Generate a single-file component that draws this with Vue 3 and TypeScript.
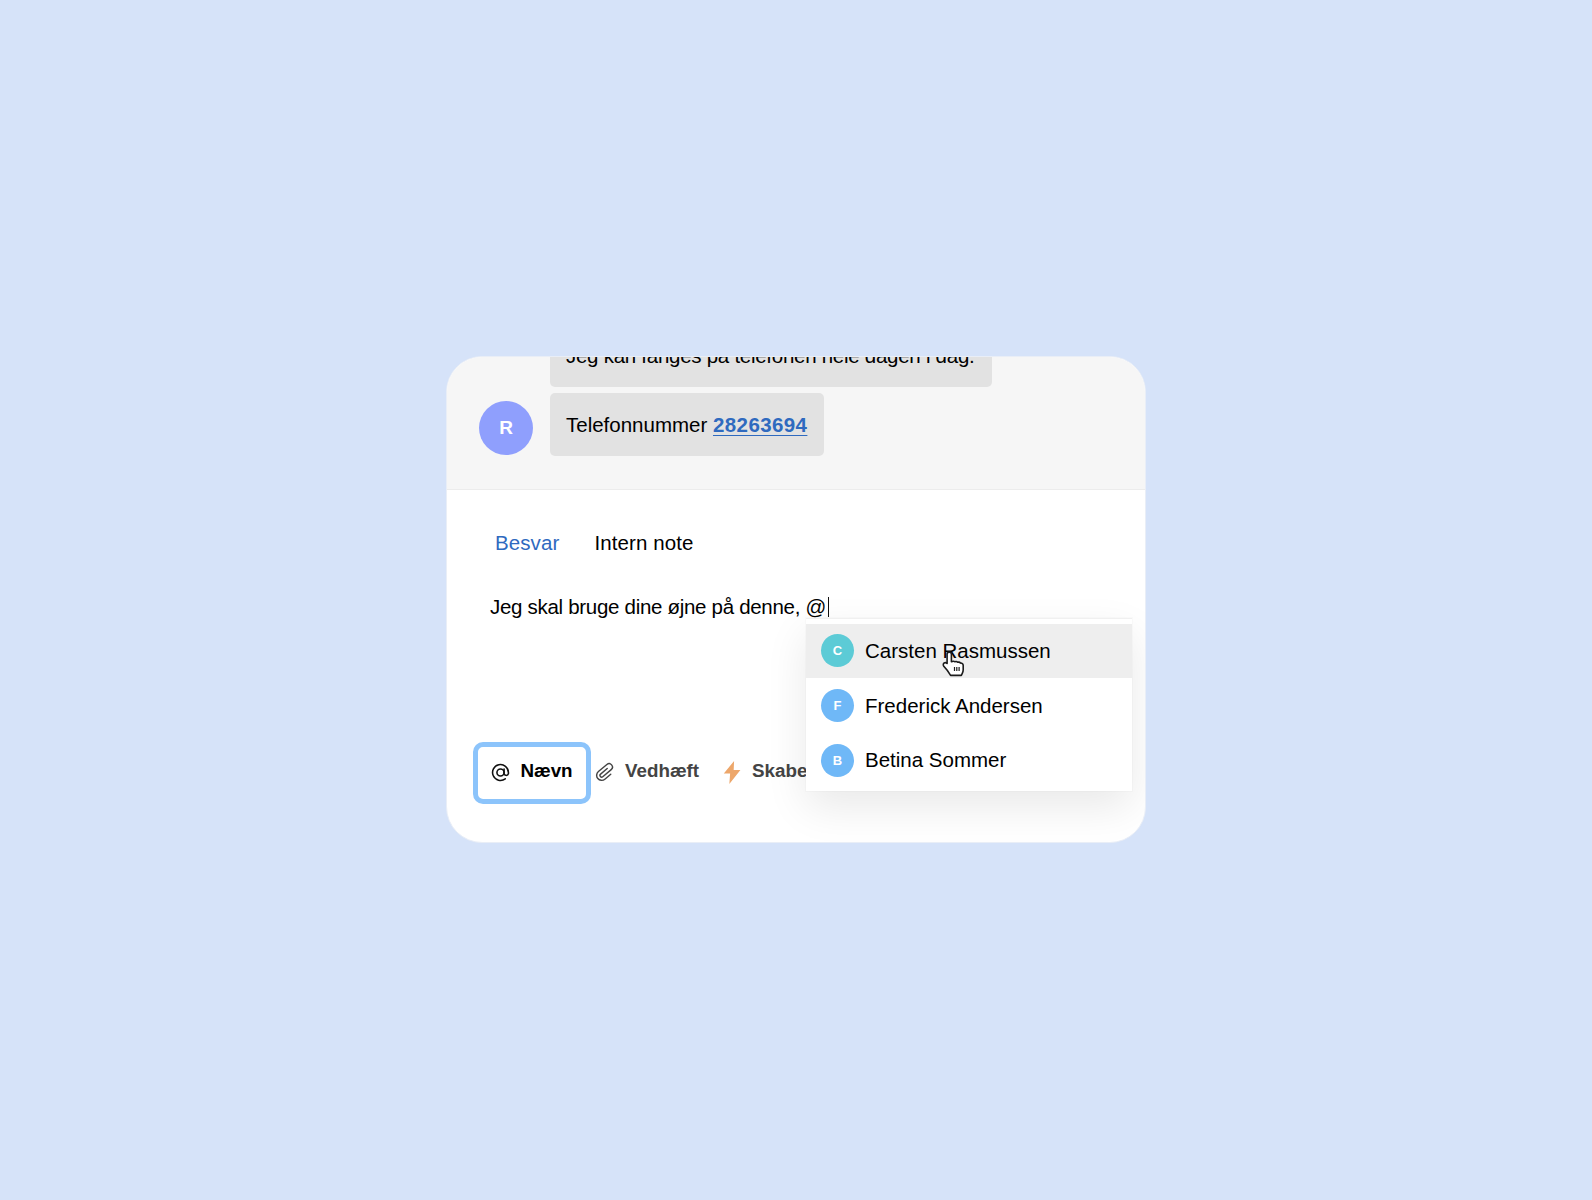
<template>
  <div class="stage">
    <div class="card">
      <section class="thread">
        <div class="message">
          <div class="bubble bubble--clipped">Jeg kan fanges på telefonen hele dagen i dag.</div>
        </div>
        <div class="message message--last">
          <div class="avatar">R</div>
          <div class="bubble">Telefonnummer <a class="phone">28263694</a></div>
        </div>
      </section>

      <section class="composer">
        <nav class="tabs">
          <span class="tab tab--active">Besvar</span>
          <span class="tab">Intern note</span>
        </nav>
        <p class="editor">Jeg skal bruge dine øjne på denne, @<span class="caret"></span></p>

        <div class="toolbar">
          <button class="tool tool--focus">
            <svg class="icon" viewBox="0 0 24 24" fill="none" stroke="#111" stroke-width="2" stroke-linecap="round" stroke-linejoin="round">
              <circle cx="12" cy="12" r="4.5" />
              <path d="M16.5 7.5v6a2.8 2.8 0 0 0 5.5 0V12a10 10 0 1 0-4 8" />
            </svg>
            <span class="tool-label">Nævn</span>
          </button>
          <button class="tool">
            <svg class="icon icon--clip" viewBox="0 0 24 24" fill="none" stroke="#444" stroke-width="1.5" stroke-linecap="round" stroke-linejoin="round">
              <path d="M10 8v9a1.75 1.75 0 0 0 3.5 0V5.5a3.5 3.5 0 0 0-7 0V17a5.2 5.2 0 0 0 10.4 0V9" transform="rotate(50 12 12)" />
            </svg>
            <span class="tool-label">Vedhæft</span>
          </button>
          <button class="tool">
            <svg class="icon icon--bolt" viewBox="0 0 24 24" preserveAspectRatio="none" fill="#eda76b">
              <path d="M14 0 1 13h8l-1 11 14-14.5h-8.5z" />
            </svg>
            <span class="tool-label">Skabelon</span>
          </button>
        </div>
      </section>

      <ul class="mentions">
        <li v-for="person in people" :key="person.name" class="mention" :class="{ 'mention--hover': person.hover }">
          <span class="mention-avatar" :class="person.color">{{ person.name[0] }}</span>
          {{ person.name }}
        </li>
      </ul>

      <svg class="cursor" viewBox="0 0 24 28">
        <path
          d="M7.2 2.6c1.3 0 2.2.9 2.2 2.2v7.4l.9-.3c1-.3 2-.1 2.5.4 1-.5 2.2-.3 2.9.5 1-.4 2.2 0 2.8.8 1.3-.2 2.7.7 2.7 2.3v4.4c0 1.3-.3 2.4-.9 3.5l-1 2.1H8.6l-3.4-5.1-3.4-4.1c-.9-1.2-.6-2.6.4-3.2.9-.5 2-.4 2.8.4l.1.1V4.8c0-1.3 1-2.2 2.1-2.2z"
          fill="#fff"
          stroke="#1c1c1c"
          stroke-width="1.6"
          stroke-linejoin="round"
        />
        <path d="M12.5 17.5v4M14.8 17.5v4M17.1 17.5v4" stroke="#1c1c1c" stroke-width="1.2" />
      </svg>
    </div>
  </div>
</template>

<script setup lang="ts">
interface Person {
  name: string
  color: string
  hover?: boolean
}

const people: Person[] = [
  { name: 'Carsten Rasmussen', color: 'teal', hover: true },
  { name: 'Frederick Andersen', color: 'blue' },
  { name: 'Betina Sommer', color: 'blue' },
]
</script>

<style>
html,
body {
  background: #d6e3f9;
}
</style>

<style scoped>
.stage {
  display: flex;
  align-items: center;
  justify-content: center;
  height: 1200px;
  padding-bottom: 2px;
  background: #d6e3f9;
  font-family: "Liberation Sans", Arial, sans-serif;
  color: #000;
  box-sizing: border-box;
}

.card {
  position: relative;
  display: flex;
  flex-direction: column;
  width: 700px;
  height: 487px;
  overflow: hidden;
  background: #fff;
  border: 1px solid #e9eef7;
  border-radius: 36px;
  box-sizing: border-box;
}

.thread {
  display: flex;
  flex-direction: column;
  justify-content: flex-end;
  gap: 6px;
  flex: none;
  height: 133px;
  padding: 0 0 33px 32px;
  overflow: hidden;
  background: #f6f6f6;
  border-bottom: 1px solid #ececec;
  box-sizing: border-box;
}

.message {
  display: flex;
  flex: none;
  align-items: flex-end;
  gap: 17px;
  padding-left: 71px;
}

.message--last {
  padding-left: 0;
}

.avatar {
  display: flex;
  align-items: center;
  justify-content: center;
  width: 54px;
  height: 54px;
  margin-bottom: 1px;
  border-radius: 50%;
  background: #8f9ffd;
  color: #fff;
  font-size: 19px;
  font-weight: 700;
}

.bubble {
  padding: 0 17px 0 16px;
  height: 63px;
  line-height: 63px;
  border-radius: 5px;
  background: #e2e2e2;
  font-size: 20.5px;
  white-space: nowrap;
}

.bubble--clipped {
  width: 409px;
  letter-spacing: -0.27px;
}

.phone {
  color: #2f6abf;
  font-weight: 700;
  letter-spacing: 0.4px;
  text-decoration: underline;
  text-underline-offset: 3px;
  text-decoration-thickness: 1px;
}

.composer {
  display: flex;
  flex: 1;
  flex-direction: column;
  padding: 39px 26px 38px;
}

.tabs {
  display: flex;
  gap: 35px;
  padding-left: 22px;
}

.tab {
  font-size: 20.5px;
  line-height: 28px;
  letter-spacing: 0.1px;
}

.tab--active {
  color: #2f6abf;
}

.editor {
  display: flex;
  align-items: center;
  margin: 36px 0 0 17px;
  font-size: 20.5px;
  line-height: 28px;
  letter-spacing: -0.3px;
}

.caret {
  width: 1px;
  height: 20px;
  margin-left: 2px;
  background: #111;
}

.toolbar {
  display: flex;
  align-items: center;
  gap: 24px;
  margin-top: auto;
}

.tool {
  display: flex;
  align-items: center;
  gap: 10px;
  padding: 0;
  border: none;
  background: none;
  color: #444;
  font: 700 18.8px "Liberation Sans", Arial, sans-serif;
  white-space: nowrap;
}

.tool-label {
  margin-top: -3px;
}

.tool--focus {
  justify-content: center;
  width: 118px;
  height: 62px;
  margin-right: -19px;
  border: 5px solid #8cc4fb;
  border-radius: 10px;
  color: #000;
  box-sizing: border-box;
}

.icon {
  width: 19px;
  height: 19px;
  flex: none;
}

.icon--clip {
  width: 23px;
  height: 23px;
  margin: -2px -2px;
}

.icon--bolt {
  height: 23px;
  margin: -2px 0;
}

.mentions {
  position: absolute;
  top: 261px;
  left: 359px;
  width: 326px;
  margin: 0;
  padding: 5px 0 3px;
  list-style: none;
  background: #fff;
  border-top: 1px solid #f0f0f0;
  box-shadow: 0 0 0 1px rgba(0, 0, 0, 0.015), 0 16px 40px rgba(0, 0, 0, 0.09);
  box-sizing: border-box;
}

.mention {
  display: flex;
  align-items: center;
  gap: 11px;
  height: 54.7px;
  padding-left: 15px;
  font-size: 20.5px;
}

.mention--hover {
  background: #eeeeee;
}

.mention-avatar {
  display: flex;
  align-items: center;
  justify-content: center;
  width: 33px;
  height: 33px;
  border-radius: 50%;
  color: #fff;
  font-size: 13px;
  font-weight: 700;
}

.teal {
  background: #5ccbd6;
}

.blue {
  background: #6fb8f7;
}

.cursor {
  position: absolute;
  top: 292px;
  left: 495px;
  width: 24px;
  height: 29px;
}
</style>
